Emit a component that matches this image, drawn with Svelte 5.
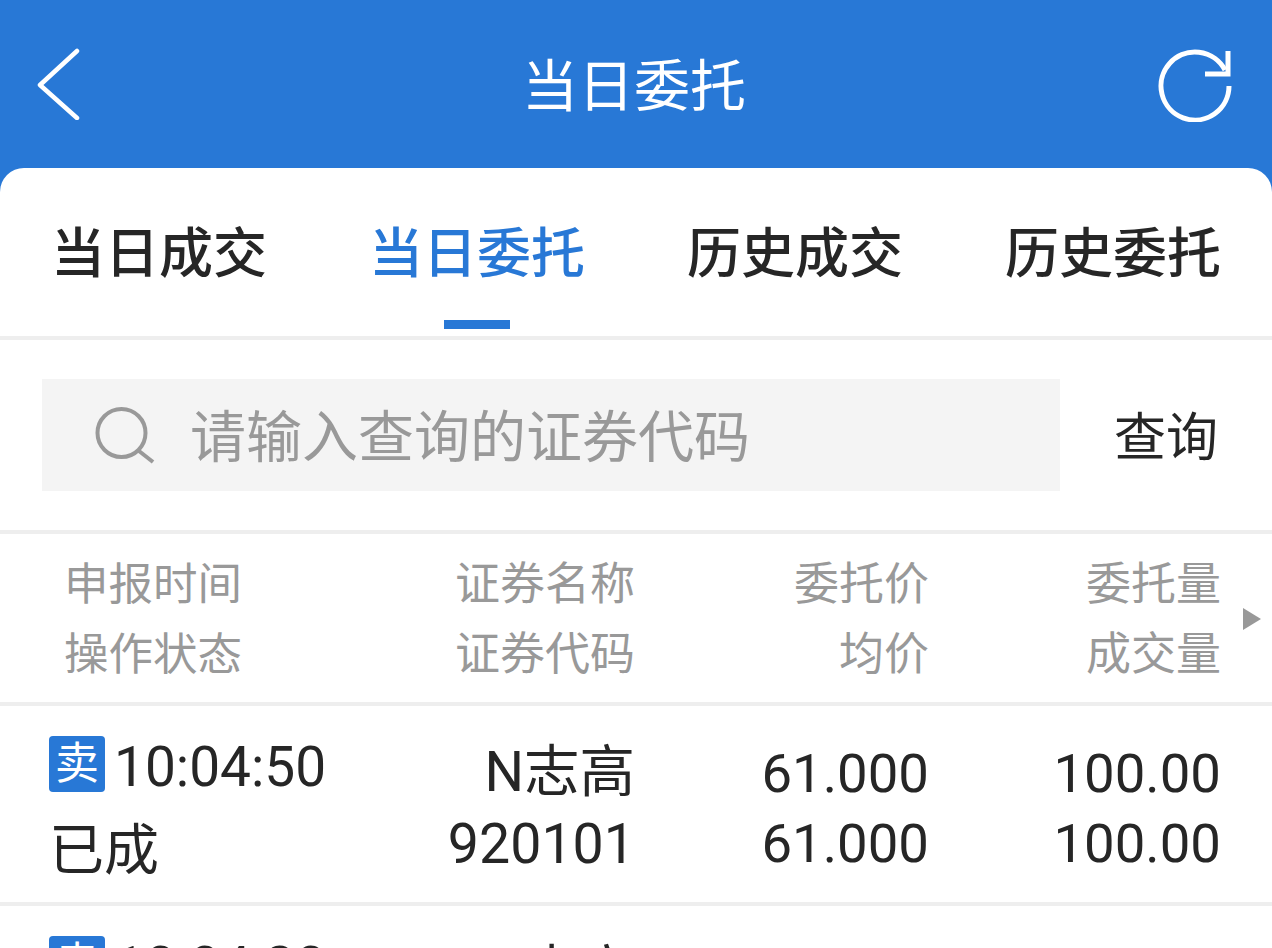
<script lang="ts">
  const tabs = ["当日成交", "当日委托", "历史成交", "历史委托"];
  const active = 1;
  const rows = [
    { side: "卖", time: "10:04:50", status: "已成", name: "N志高", code: "920101", price: "61.000", avg: "61.000", qty: "100.00", done: "100.00" },
    { side: "卖", time: "10:04:20", status: "已成", name: "N志高", code: "920101", price: "60.000", avg: "60.000", qty: "100.00", done: "100.00" },
  ];
</script>

<div class="page">
  <header class="topbar">
    <svg class="back" viewBox="0 0 44 72" width="44" height="72" aria-hidden="true">
      <path d="M41 3 L4 37 L41 70" fill="none" stroke="#fff" stroke-width="4.5" stroke-linecap="round" stroke-linejoin="round" />
    </svg>
    <h1>当日委托</h1>
    <svg class="refresh" viewBox="0 0 76 76" width="76" height="76" aria-hidden="true">
      <path d="M72 40 A34 34 0 1 1 68 24" fill="none" stroke="#fff" stroke-width="5" />
      <path d="M71 5 V28 H48" fill="none" stroke="#fff" stroke-width="5" />
    </svg>
  </header>

  <main class="card">
    <nav class="tabs">
      {#each tabs as tab, i}
        <div class="tab" class:active={i === active}>{tab}</div>
      {/each}
    </nav>

    <section class="search">
      <div class="input">
        <svg viewBox="0 0 62 62" width="62" height="62" aria-hidden="true">
          <circle cx="27.5" cy="29" r="24" fill="none" stroke="#999" stroke-width="4" />
          <path d="M45 47 L59 58" stroke="#999" stroke-width="4" />
        </svg>
        <span>请输入查询的证券代码</span>
      </div>
      <div class="go">查询</div>
    </section>

    <div class="thead">
      <div class="first"><span>申报时间</span><span>操作状态</span></div>
      <div><span>证券名称</span><span>证券代码</span></div>
      <div><span>委托价</span><span>均价</span></div>
      <div><span>委托量</span><span>成交量</span></div>
      <i class="more"></i>
    </div>

    {#each rows as row}
      <div class="row">
        <div class="first">
          <div class="when"><b>{row.side}</b><span class="time">{row.time}</span></div>
          <div class="status">{row.status}</div>
        </div>
        <div class="security"><span>{row.name}</span><span>{row.code}</span></div>
        <div><span>{row.price}</span><span>{row.avg}</span></div>
        <div><span>{row.qty}</span><span>{row.done}</span></div>
      </div>
    {/each}
  </main>
</div>

<style>
  :global(body) {
    margin: 0;
    background: #2878d6;
    overflow: hidden;
  }
  .page {
    width: 1272px;
    height: 948px;
    overflow: hidden;
    font-family: Roboto, "Noto Sans CJK SC", sans-serif;
    color: #262626;
  }
  .topbar {
    height: 168px;
    padding: 0 39px 0 36px;
    box-sizing: border-box;
    display: flex;
    align-items: center;
    justify-content: space-between;
    position: relative;
  }
  .topbar h1 {
    margin: 0;
    font-size: 56px;
    font-weight: 400;
    color: #fff;
    position: absolute;
    left: 0;
    right: 4px;
    top: 3px;
    text-align: center;
    line-height: 168px;
  }
  .card {
    background: #fff;
    border-radius: 24px 24px 0 0;
    height: 780px;
  }
  .tabs {
    height: 172px;
    box-sizing: border-box;
    border-bottom: 4px solid #eee;
    display: grid;
    grid-template-columns: repeat(4, 318px);
  }
  .tab {
    font-size: 54px;
    font-weight: 500;
    text-align: center;
    line-height: 174px;
    position: relative;
  }
  .tab.active {
    color: #2878d6;
  }
  .tab.active::after {
    content: "";
    position: absolute;
    left: 126px;
    bottom: 13px;
    width: 66px;
    height: 9px;
    background: #2878d6;
  }
  .search {
    height: 194px;
    box-sizing: border-box;
    border-bottom: 4px solid #eee;
    padding: 39px 54px 39px 42px;
    display: flex;
    justify-content: space-between;
    align-items: center;
  }
  .input {
    width: 1018px;
    height: 112px;
    background: #f4f4f4;
    display: flex;
    align-items: center;
    gap: 34px;
    padding-left: 52px;
    box-sizing: border-box;
    color: #999;
    font-size: 56px;
  }
  .input span {
    margin-bottom: 6px;
  }
  .go {
    font-size: 52px;
    margin-bottom: 4px;
  }
  .thead,
  .row {
    display: grid;
    grid-template-columns: 365px 270px 294px 292px;
    padding-right: 51px;
    box-sizing: border-box;
    border-bottom: 4px solid #eee;
    position: relative;
  }
  .thead {
    height: 172px;
    padding-top: 4px;
    color: #999;
    font-size: 45px;
    align-items: center;
  }
  .thead > div,
  .row > div {
    display: flex;
    flex-direction: column;
    align-items: flex-end;
  }
  .thead span {
    line-height: 70px;
  }
  .thead > .first {
    align-items: flex-start;
    padding-left: 64px;
    font-size: 44.5px;
  }
  .more {
    position: absolute;
    right: 11px;
    top: 74px;
    border-left: 18px solid #999;
    border-top: 11px solid transparent;
    border-bottom: 11px solid transparent;
  }
  .row {
    height: 200px;
    padding-top: 8px;
    font-size: 54.5px;
    align-items: center;
  }
  .row span {
    line-height: 70px;
  }
  .row > .security {
    font-size: 55.5px;
    padding-top: 2px;
  }
  .row > .security span:last-child {
    margin-top: 2px;
  }
  .row > .first {
    align-items: flex-start;
    padding-left: 49px;
  }
  .when {
    display: flex;
    align-items: center;
    gap: 9px;
    font-size: 55px;
    line-height: 56px;
    margin-top: -2px;
  }
  .row .time {
    line-height: 50px;
    margin-top: 6px;
  }
  .when b {
    width: 56px;
    height: 56px;
    border-radius: 4px;
    background: #2878d6;
    color: #fff;
    font-size: 44px;
    font-weight: 400;
    text-align: center;
  }
  .status {
    margin-top: 30px;
    font-size: 55px;
    line-height: 56px;
  }
</style>
